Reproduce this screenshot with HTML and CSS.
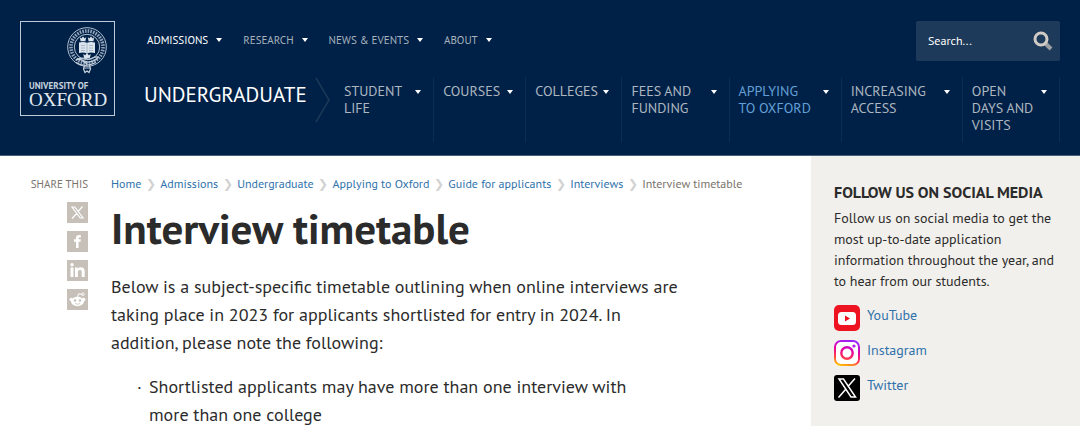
FILE: index.html
```html
<!DOCTYPE html>
<html lang="en">
<head>
<meta charset="utf-8">
<meta name="viewport" content="width=device-width, initial-scale=1">
<title>Interview timetable | University of Oxford</title>
<link rel="stylesheet" href="styles.css">
</head>
<body>
<header class="site-header">
  <a class="logo" href="#" aria-label="University of Oxford">
    <svg class="crest" viewBox="0 0 40 48" aria-hidden="true">
      <circle cx="20" cy="20" r="19.3" fill="none" stroke="#b4c1d0" stroke-width="1"/>
      <circle cx="20" cy="20" r="16" fill="none" stroke="#8fa2b8" stroke-width="3.6" stroke-dasharray="1.6 1.1"/>
      <circle cx="20" cy="20" r="12.7" fill="none" stroke="#b4c1d0" stroke-width="1"/>
      <path d="M12 15.500q4.500-1.300 8 .3 3.500-1.600 8-.3v10.500q-4.500-1.200-8 .4-3.500-1.600-8-.4z" fill="#dce5ee"/>
      <path d="M20 16v10M14 18.500h4M14 21h4M14 23.500h4M22 18.500h4M22 21h4M22 23.500h4" stroke="#8798ad" stroke-width=".6"/>
      <path d="M12.800 10l1.500 1.500 1.700-2 1.700 2 1.500-1.500-.8 4.300h-4.800zM20.800 10l1.500 1.500 1.700-2 1.700 2 1.500-1.500-.8 4.300h-4.800zM16.200 27l2 1.300L20 26l1.800 2.300 2-1.300-1 4h-5.600z" fill="#dce5ee"/>
      <path d="M9 33c5-3 8 3 13 2s8-2 9-5c-5-1-6 3-10 2s-8-2-12 1zM9 35.500c5 3.500 12 4 20 0M12 31l8 6M17.500 38l-1 4 1.500 3.500 2-1.500 2 1.500 1.500-3.500-1-4M17 41h6" fill="none" stroke="#c7d2de" stroke-width="1.200"/>
    </svg>
    <span class="logo-small">UNIVERSITY OF</span>
    <span class="logo-large">OXFORD</span>
  </a>
  <div class="header-body">
    <div class="header-top">
      <nav class="top-nav" aria-label="Main">
        <a class="current" href="#">ADMISSIONS</a>
        <a href="#">RESEARCH</a>
        <a href="#">NEWS &amp; EVENTS</a>
        <a href="#">ABOUT</a>
      </nav>
      <form class="search" role="search">
        <input type="search" aria-label="Search" placeholder="Search...">
        <button type="submit" aria-label="Search">
          <svg viewBox="0 0 20 20" aria-hidden="true"><path d="M12 12l6 6" stroke="#9b9fa4" stroke-width="4"/><circle cx="8" cy="8" r="6" fill="none" stroke="#d0cbc5" stroke-width="3"/></svg>
        </button>
      </form>
    </div>
    <div class="section-row">
      <a class="section-title" href="#">UNDERGRADUATE</a>
      <svg class="section-arrow" viewBox="0 0 16 46" aria-hidden="true"><path d="M1 1l13 22L1 45" fill="none" stroke="#1b3957" stroke-width="1.500"/></svg>
      <nav class="section-nav" aria-label="Undergraduate">
        <a href="#">STUDENT<br>LIFE</a>
        <a href="#">COURSES</a>
        <a href="#">COLLEGES</a>
        <a href="#">FEES AND<br>FUNDING</a>
        <a class="active" href="#">APPLYING<br>TO OXFORD</a>
        <a href="#">INCREASING<br>ACCESS</a>
        <a href="#">OPEN<br>DAYS AND<br>VISITS</a>
      </nav>
    </div>
  </div>
</header>
<div class="page">
  <div class="share">
    <span class="share-label">SHARE THIS</span>
    <a href="#" aria-label="X"><svg viewBox="0 0 21 21" aria-hidden="true"><path d="M5 5h2.800l8.200 11h-2.800zM15.500 4.500l-4.700 5.300M9.700 11.300L5 16.500" fill="none" stroke="#fff" stroke-width="1.200"/></svg></a>
    <a href="#" aria-label="Facebook"><svg viewBox="0 0 21 21" aria-hidden="true"><path d="M9 17v-6.300H7V8.200h2V6.800C9 4.800 10.200 4 12 4h1.800v2.500h-1.200c-.7 0-1 .3-1 1v.7h2.200l-.3 2.500h-1.900V17z" fill="#fff"/></svg></a>
    <a href="#" aria-label="LinkedIn"><svg viewBox="0 0 21 21" aria-hidden="true"><path d="M3.500 7.500h3V17h-3zM8 7.500h2.800v1.300c.6-1 1.500-1.500 2.900-1.500 2.800 0 4 1.500 4 4.400V17h-3v-4.700c0-1.400-.4-2.300-1.700-2.300s-2.100.9-2.100 2.300V17H8z" fill="#fff"/><circle cx="5" cy="4.700" r="1.700" fill="#fff"/></svg></a>
    <a href="#" aria-label="Reddit"><svg viewBox="0 0 21 21" aria-hidden="true"><ellipse cx="10.500" cy="12.500" rx="6.500" ry="4.700" fill="#fff"/><circle cx="4.200" cy="10.500" r="1.700" fill="#fff"/><circle cx="16.800" cy="10.500" r="1.700" fill="#fff"/><path d="M10.500 8.500l1-3.700 4 .7" fill="none" stroke="#fff"/><circle cx="16" cy="5.200" r="1.300" fill="none" stroke="#fff" stroke-width=".8"/><circle cx="8" cy="11.500" r="1.200" fill="#c6c0b9"/><circle cx="13" cy="11.500" r="1.200" fill="#c6c0b9"/><path d="M8 14.500q2.500 1.500 5 0" fill="none" stroke="#c6c0b9" stroke-width=".8"/></svg></a>
  </div>
  <main class="content">
    <nav aria-label="Breadcrumb">
      <ol class="breadcrumb">
        <li><a href="#">Home</a></li>
        <li><a href="#">Admissions</a></li>
        <li><a href="#">Undergraduate</a></li>
        <li><a href="#">Applying to Oxford</a></li>
        <li><a href="#">Guide for applicants</a></li>
        <li><a href="#">Interviews</a></li>
        <li aria-current="page">Interview timetable</li>
      </ol>
    </nav>
    <h1>Interview timetable</h1>
    <div class="prose">
      <p>Below is a subject-specific timetable outlining when online interviews are<br>taking place in 2023 for applicants shortlisted for entry in 2024. In<br>addition, please note the following:</p>
      <ul>
        <li>Shortlisted applicants may have more than one interview with<br>more than one college</li>
      </ul>
    </div>
  </main>
  <aside class="social">
    <h2>FOLLOW US ON SOCIAL MEDIA</h2>
    <p>Follow us on social media to get the<br>most up-to-date application<br>information throughout the year, and<br>to hear from our students.</p>
    <ul>
      <li><a href="#"><svg viewBox="0 0 26 26" aria-hidden="true"><rect width="26" height="26" rx="5" fill="#ed1320"/><rect x="4" y="7" width="18" height="13" rx="3.500" fill="#fff"/><path d="M11 10.500v6l5-3z" fill="#ed1320"/></svg>YouTube</a></li>
      <li><a href="#"><svg viewBox="0 0 26 26" aria-hidden="true"><defs><linearGradient id="ig" gradientUnits="userSpaceOnUse" x1="8" y1="26" x2="15" y2="0"><stop offset="0" stop-color="#ffc400"/><stop offset=".3" stop-color="#ff3b50"/><stop offset=".6" stop-color="#e500a0"/><stop offset="1" stop-color="#9a22ff"/></linearGradient></defs><rect width="26" height="26" rx="6" fill="#fff"/><g fill="none" stroke="url(#ig)" stroke-width="2"><rect x="1" y="1" width="24" height="24" rx="6"/><circle cx="13" cy="13" r="5.700" stroke-width="2.400"/></g><circle cx="20" cy="6" r="1.600" fill="#b51be8"/></svg>Instagram</a></li>
      <li><a href="#"><svg viewBox="0 0 26 26" aria-hidden="true"><rect width="26" height="26" rx="3" fill="#000"/><path d="M5 4h4.500L21.500 22H17zM21 3.500l-7.300 8.300M12 14l-7.500 8.500" fill="none" stroke="#fff" stroke-width="1.500"/></svg>Twitter</a></li>
    </ul>
  </aside>
</div>
</body>
</html>
```
FILE: styles.css
```css
* { box-sizing: border-box; }
body { margin: 0; background: #fff; color: #2b2b2b; font-family: "PT Sans", Lato, "Noto Sans", sans-serif; }
a { color: #3072ab; text-decoration: none; }
h1, h2, p, ul, ol { margin: 0; padding: 0; }
ul, ol { list-style: none; }
svg { display: block; }

.site-header { display: flex; gap: 29px; padding: 21px 20px 13px; background: #002147; border-bottom: 1px solid #4b6079; }
.logo { display: flex; flex: none; flex-direction: column; width: 95px; height: 95px; padding: 5px 7px 0 8px; border: 1px solid #bfcad6; color: #e3eaf1; }
.crest { width: 40px; height: 48px; align-self: flex-end; }
.logo-small { margin-top: 6px; font: 700 9px/10px "PT Sans", Lato, sans-serif; color: #c7d2de; white-space: nowrap; }
.logo-large { font: 19px/18px "Liberation Serif", serif; }
.header-body { flex: 1; }
.header-top { display: flex; justify-content: space-between; }
.top-nav { display: flex; gap: 21px; padding: 10px 0 0 3px; font-size: 11px; line-height: 18px; }
.top-nav a { display: flex; align-items: center; gap: 8px; height: 18px; color: #a9b3be; }
.top-nav .current { color: #fff; }
.top-nav a::after, .section-nav a::after { content: ""; border: 3px solid transparent; border-top: 4px solid #fff; border-bottom: 0; }
.search { display: flex; align-items: center; width: 144px; height: 40px; padding: 0 7px 0 12px; border-radius: 2px; background: #1e3a5a; }
.search input { flex: 1; min-width: 0; padding: 0; border: 0; outline: 0; background: none; color: #fff; font: 12px/18px "PT Sans", Lato, sans-serif; }
.search input::placeholder { color: #fff; opacity: 1; }
.search button { padding: 0; border: 0; background: none; }
.search svg { width: 20px; height: 20px; }
.section-row { display: flex; align-items: flex-start; margin-top: 16px; }
.section-title { width: 171px; padding-top: 4px; color: #fff; font-size: 21px; line-height: 28px; }
.section-arrow { width: 16px; height: 46px; margin-right: 4px; }
.section-nav { display: grid; flex: 1; grid-template-columns: 99fr 92fr 96fr 107fr 112fr 121fr 97fr; min-height: 65px; }
.section-nav a { display: flex; align-items: flex-start; justify-content: space-between; padding: 6px 12px 0 9px; border-right: 1px solid #0b2d52; color: #aeb7c0; font-size: 14px; line-height: 17px; white-space: nowrap; }
.section-nav a::after { margin-top: 7px; }
.section-nav .active { color: #64a0d8; }

.page { display: grid; grid-template-columns: 88px 1fr 269px; column-gap: 23px; align-items: start; }
.share { display: flex; flex-direction: column; align-items: flex-end; gap: 8px; padding-top: 19px; }
.share-label { margin-bottom: 1px; color: #7a736b; font-size: 11px; line-height: 18px; }
.share a { background: #c6c0b9; }
.share svg { width: 21px; height: 21px; }
.content { min-width: 0; padding-top: 19px; }
.breadcrumb { display: flex; font-size: 12px; line-height: 18px; color: #7a736b; white-space: nowrap; }
.breadcrumb li { display: flex; align-items: center; }
.breadcrumb li + li::before { content: "❯"; width: 19px; color: #d2d2d2; font-size: 12px; text-align: center; }
h1 { margin-top: 8px; font-size: 43px; line-height: 54px; }
.prose { margin-top: 18px; font-size: 18px; line-height: 28px; white-space: nowrap; }
.prose ul { margin-top: 16px; }
.prose li { display: flex; padding-left: 26px; }
.prose li::before { content: "·"; width: 12px; }
.social { padding: 26px 20px 25px 23px; background: #f2f0ec; }
.social h2 { font-size: 16px; line-height: 20px; white-space: nowrap; }
.social p { margin-top: 6px; font-size: 14px; line-height: 21px; white-space: nowrap; }
.social ul { display: flex; flex-direction: column; gap: 9px; margin-top: 13px; }
.social li a { display: flex; gap: 7px; font-size: 14px; line-height: 20px; }
.social li svg { width: 26px; height: 26px; }
```
